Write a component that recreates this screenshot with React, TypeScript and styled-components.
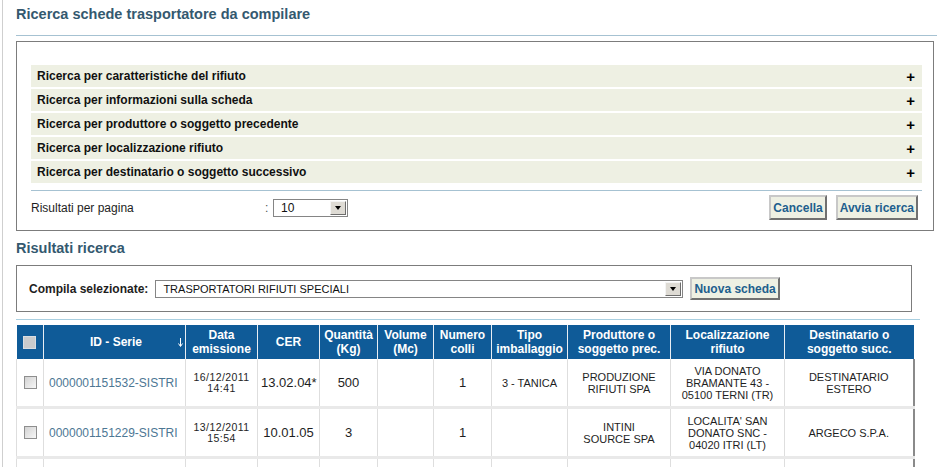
import styled, { createGlobalStyle } from "styled-components";

const GlobalStyle = createGlobalStyle`
    html, body {
        margin: 0;
        padding: 0;
        background: #fff;
    }
    body {
        font-family: "Liberation Sans", Arial, sans-serif;
        font-size: 12px;
        color: #1e1e1e;
    }
`;

const Page = styled.div`
    box-sizing: border-box;
    width: 948px;
    height: 467px;
    overflow: hidden;
    margin-left: 2px;
    padding-left: 13px;
    border-left: 1px solid #cfcfcf;
`;

const Title = styled.h1`
    margin: 0;
    padding-top: 6px;
    font-size: 14.5px;
    line-height: 17px;
    font-weight: bold;
    color: #34596f;
`;

const SubTitle = styled.h2`
    margin: 9px 0 0;
    font-size: 14.5px;
    line-height: 17px;
    font-weight: bold;
    color: #34596f;
`;

const Rule = styled.div<{ $w: number; $color?: string }>`
    width: ${(p) => p.$w}px;
    height: 1px;
    background: ${(p) => p.$color || "#a6c2d2"};
`;

const SearchBox = styled.section`
    box-sizing: border-box;
    width: 918px;
    height: 190px;
    margin-top: 5px;
    padding: 23px 0 0 14px;
    border: 1px solid #7c7c7c;
`;

const Sections = styled.ul`
    list-style: none;
    margin: 0;
    padding: 0;
    width: 891px;
    display: flex;
    flex-direction: column;
    gap: 2px;
`;

const Section = styled.li`
    height: 22px;
    padding: 0 7px 0 6px;
    background: #eef0e3;
    display: flex;
    align-items: center;
    justify-content: space-between;
    font-weight: bold;
    font-size: 12px;
    color: #111;
`;

const Plus = styled.span`
    font-size: 15px;
    font-weight: bold;
    color: #000;
`;

const PerPageRow = styled.div`
    width: 887px;
    height: 25px;
    margin-top: 4px;
    display: flex;
    align-items: center;
`;

const Label = styled.span<{ $w?: number; $bold?: boolean }>`
    width: ${(p) => (p.$w ? `${p.$w}px` : "auto")};
    font-size: 12px;
    font-weight: ${(p) => (p.$bold ? "bold" : "normal")};
    color: #1e1e1e;
`;

const Colon = styled.span`
    width: 8px;
    color: #555;
`;

const Select = styled.div<{ $w: number }>`
    box-sizing: border-box;
    width: ${(p) => p.$w}px;
    height: 18px;
    border: 1px solid #858585;
    padding: 1px;
    display: flex;
    align-items: center;
    background: #fff;
`;

const SelectText = styled.span<{ $size: number }>`
    flex: 1;
    padding-left: 6px;
    font-size: ${(p) => p.$size}px;
    color: #111;
`;

const DropBtn = styled.span`
    box-sizing: border-box;
    width: 16px;
    height: 14px;
    border: 1px solid;
    border-color: #f4f4f4 #6d6d6d #6d6d6d #f4f4f4;
    background: #dedbd4;
    display: flex;
    align-items: center;
    justify-content: center;

    &::after {
        content: "";
        border-left: 3.5px solid transparent;
        border-right: 3.5px solid transparent;
        border-top: 4px solid #000;
    }
`;

const Buttons = styled.div`
    margin-left: auto;
    display: flex;
    gap: 9px;
`;

const Button = styled.button<{ $h?: number }>`
    box-sizing: border-box;
    height: ${(p) => p.$h || 25}px;
    padding: 0 2px;
    font-family: "Liberation Sans", Arial, sans-serif;
    font-size: 12px;
    font-weight: bold;
    color: #215e8d;
    background: #eef0e3;
    border: 2px solid;
    border-color: #c8c8c8 #707070 #707070 #c8c8c8;
`;

const CompilaBox = styled.section`
    box-sizing: border-box;
    width: 896px;
    height: 47px;
    margin-top: 8px;
    padding-left: 12px;
    border: 1px solid #7c7c7c;
    display: flex;
    align-items: center;
    gap: 7px;
`;

const Table = styled.table`
    margin-top: 5px;
    width: 897px;
    border-collapse: collapse;
    table-layout: fixed;
`;

const Th = styled.th`
    height: 34px;
    padding: 0 2px;
    background: #0f5b98;
    color: #fff;
    font-size: 12px;
    line-height: 14px;
    font-weight: bold;
    text-align: center;
    vertical-align: middle;
    border-left: 1px solid #e8eef4;

    &:first-child {
        border-left: none;
    }
`;

const SortHead = styled.div`
    display: flex;
    align-items: center;
    padding-left: 8px;

    span {
        flex: 1;
    }
`;

type CellKind = "id" | "big" | "small" | "date";

const Td = styled.td<{ $kind?: CellKind; $last?: boolean }>`
    height: 47px;
    padding: 0 3px;
    border-left: 1px solid #dedede;
    border-bottom: 3px solid #e9e9e9;
    border-right: ${(p) => (p.$last ? "2px solid #8a8a8a" : "none")};
    text-align: ${(p) => (p.$kind === "id" ? "left" : "center")};
    vertical-align: middle;
    color: ${(p) => (p.$kind === "id" ? "#4d7794" : "#1e1e1e")};
    font-size: ${(p) =>
        p.$kind === "id" ? 12 : p.$kind === "big" ? 13 : p.$kind === "date" ? 10.5 : 11}px;
    line-height: ${(p) => (p.$kind === "date" ? 11 : 12)}px;
    letter-spacing: ${(p) => (p.$kind === "date" ? 0.4 : 0)}px;
    padding-left: ${(p) => (p.$kind === "id" ? 5 : 3)}px;
`;

const Check = styled.span<{ $head?: boolean }>`
    display: inline-block;
    box-sizing: border-box;
    width: 13px;
    height: 13px;
    vertical-align: middle;
    border: 1px solid ${(p) => (p.$head ? "#d8dde2" : "#8e8e8e")};
    background: ${(p) =>
        p.$head ? "#c9cbcd" : "linear-gradient(135deg, #d2d2d2, #f7f7f7)"};
`;

const sections = [
    "Ricerca per caratteristiche del rifiuto",
    "Ricerca per informazioni sulla scheda",
    "Ricerca per produttore o soggetto precedente",
    "Ricerca per localizzazione rifiuto",
    "Ricerca per destinatario o soggetto successivo",
];

const widths = [27, 142, 72, 62, 58, 56, 58, 76, 103, 114, 129];

const heads: string[][] = [
    ["Data", "emissione"],
    ["CER"],
    ["Quantità", "(Kg)"],
    ["Volume", "(Mc)"],
    ["Numero", "colli"],
    ["Tipo", "imballaggio"],
    ["Produttore o", "soggetto prec."],
    ["Localizzazione", "rifiuto"],
    ["Destinatario o", "soggetto succ."],
];

const rows = [
    {
        id: "0000001151532-SISTRI",
        date: ["16/12/2011", "14:41"],
        cer: "13.02.04*",
        qty: "500",
        vol: "",
        colli: "1",
        tipo: "3 - TANICA",
        prod: ["PRODUZIONE", "RIFIUTI SPA"],
        loc: ["VIA DONATO", "BRAMANTE 43 -", "05100 TERNI (TR)"],
        dest: ["DESTINATARIO", "ESTERO"],
    },
    {
        id: "0000001151229-SISTRI",
        date: ["13/12/2011", "15:54"],
        cer: "10.01.05",
        qty: "3",
        vol: "",
        colli: "1",
        tipo: "",
        prod: ["INTINI", "SOURCE SPA"],
        loc: ["LOCALITA' SAN", "DONATO SNC -", "04020 ITRI (LT)"],
        dest: ["ARGECO S.P.A."],
    },
];

function Lines({ items }: { items: string[] }) {
    return (
        <>
            {items.map((t, i) => (
                <span key={i}>
                    {i > 0 && <br />}
                    {t}
                </span>
            ))}
        </>
    );
}

function SortArrow() {
    return (
        <svg width="5" height="9" viewBox="0 0 5 9">
            <path d="M2.5 0 V8 M0.5 5.5 L2.5 8.5 L4.5 5.5" stroke="#fff" strokeWidth="1" fill="none" />
        </svg>
    );
}

export default function App() {
    return (
        <Page>
            <GlobalStyle />
            <Title>Ricerca schede trasportatore da compilare</Title>
            <Rule $w={921} style={{ marginTop: 12 }} />

            <SearchBox>
                <Sections>
                    {sections.map((s) => (
                        <Section key={s}>
                            {s}
                            <Plus>+</Plus>
                        </Section>
                    ))}
                </Sections>
                <Rule $w={891} style={{ marginTop: 7 }} />
                <PerPageRow>
                    <Label $w={234}>Risultati per pagina</Label>
                    <Colon>:</Colon>
                    <Select $w={75}>
                        <SelectText $size={12}>10</SelectText>
                        <DropBtn />
                    </Select>
                    <Buttons>
                        <Button>Cancella</Button>
                        <Button>Avvia ricerca</Button>
                    </Buttons>
                </PerPageRow>
            </SearchBox>

            <SubTitle>Risultati ricerca</SubTitle>
            <CompilaBox>
                <Label $bold>Compila selezionate:</Label>
                <Select $w={528}>
                    <SelectText $size={11}>TRASPORTATORI RIFIUTI SPECIALI</SelectText>
                    <DropBtn />
                </Select>
                <Button $h={23}>Nuova scheda</Button>
            </CompilaBox>
            <Rule $w={904} $color="#a9cfe0" style={{ marginTop: 7 }} />

            <Table>
                <colgroup>
                    {widths.map((w, i) => (
                        <col key={i} style={{ width: w }} />
                    ))}
                </colgroup>
                <thead>
                    <tr>
                        <Th>
                            <Check $head />
                        </Th>
                        <Th>
                            <SortHead>
                                <span>ID - Serie</span>
                                <SortArrow />
                            </SortHead>
                        </Th>
                        {heads.map((h, i) => (
                            <Th key={i}>
                                <Lines items={h} />
                            </Th>
                        ))}
                    </tr>
                </thead>
                <tbody>
                    {rows.map((r) => (
                        <tr key={r.id}>
                            <Td>
                                <Check />
                            </Td>
                            <Td $kind="id">{r.id}</Td>
                            <Td $kind="date">
                                <Lines items={r.date} />
                            </Td>
                            <Td $kind="big">{r.cer}</Td>
                            <Td $kind="big">{r.qty}</Td>
                            <Td $kind="big">{r.vol}</Td>
                            <Td $kind="big">{r.colli}</Td>
                            <Td $kind="small">{r.tipo}</Td>
                            <Td $kind="small">
                                <Lines items={r.prod} />
                            </Td>
                            <Td $kind="small">
                                <Lines items={r.loc} />
                            </Td>
                            <Td $kind="small" $last>
                                <Lines items={r.dest} />
                            </Td>
                        </tr>
                    ))}
                    <tr>
                        {widths.map((_, i) => (
                            <Td key={i} $last={i === widths.length - 1} />
                        ))}
                    </tr>
                </tbody>
            </Table>
        </Page>
    );
}
